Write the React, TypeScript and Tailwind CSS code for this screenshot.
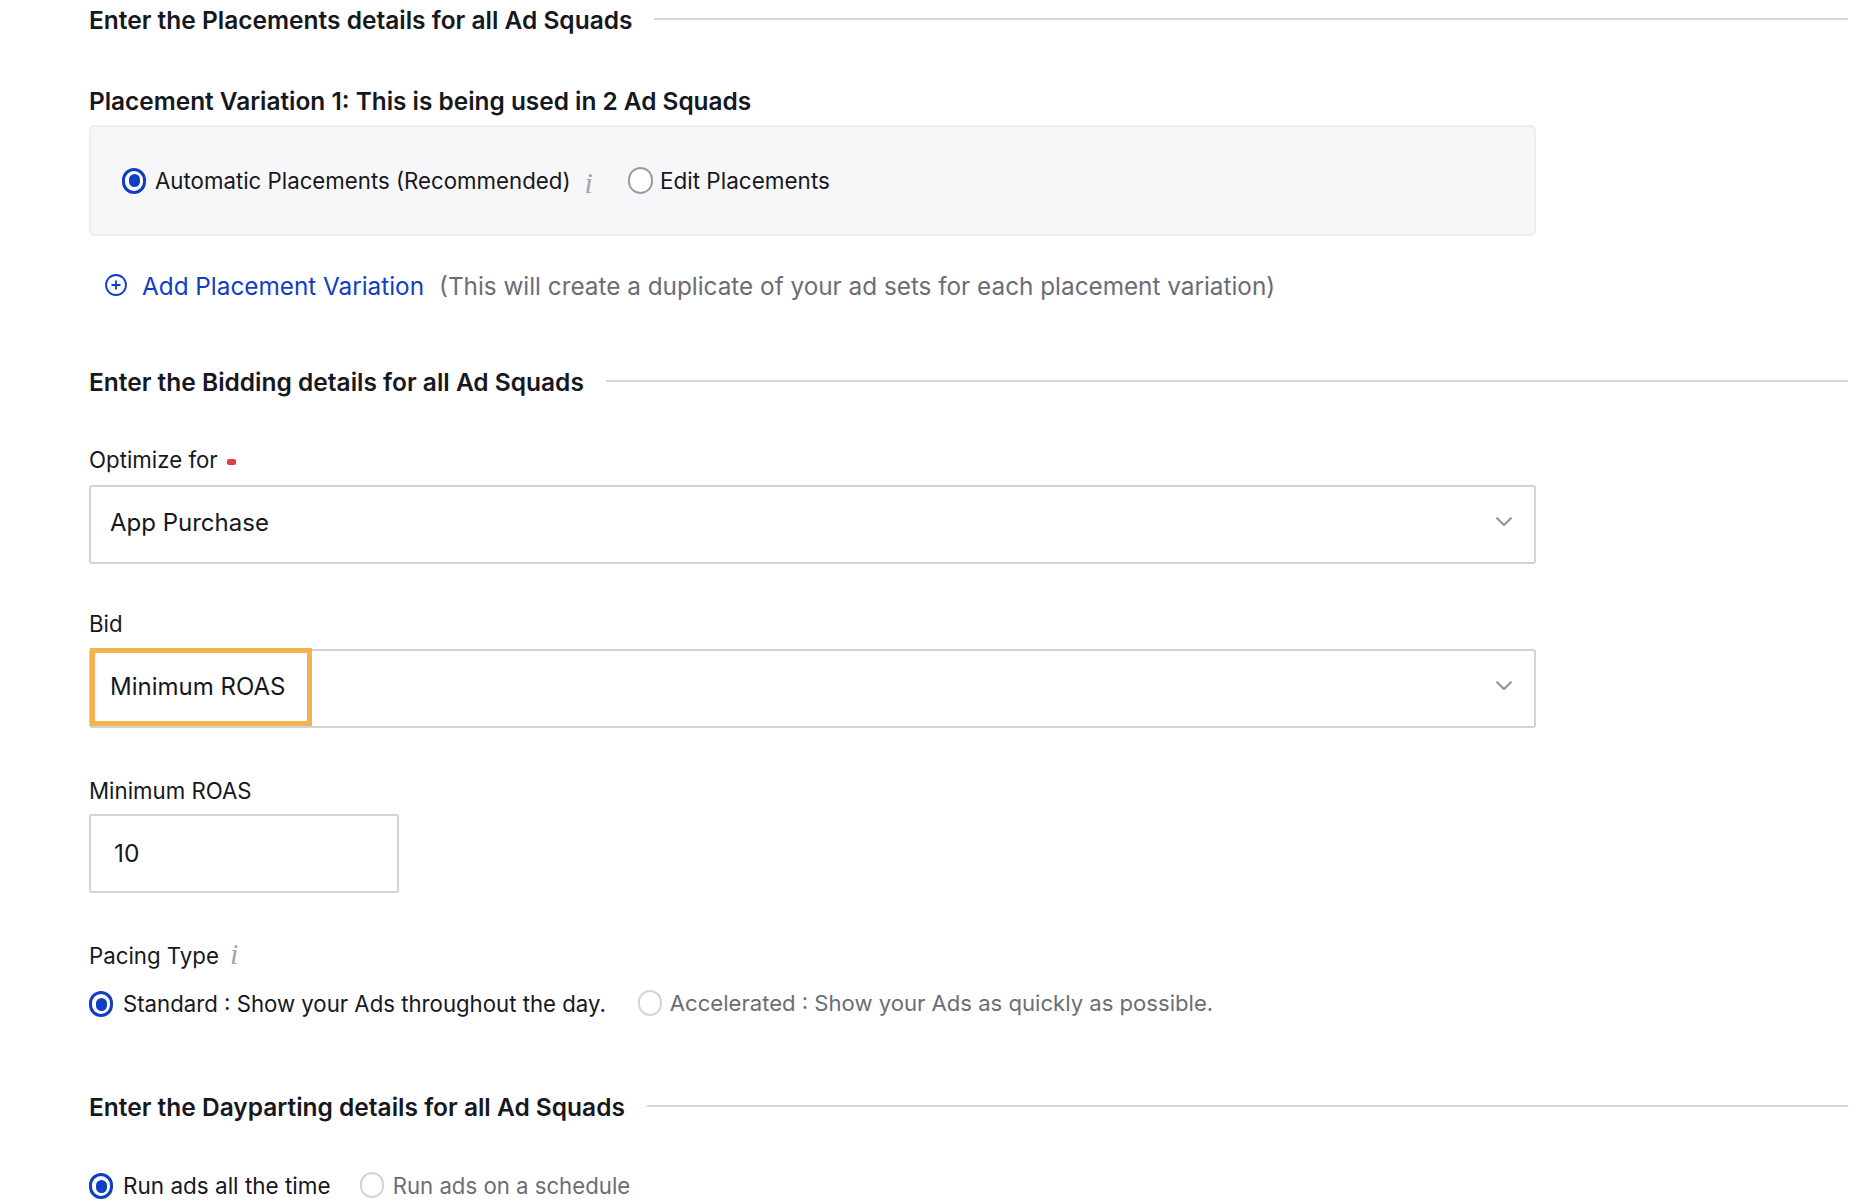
import React from "react";

function Radio({ on, tone = "dark" }: { on?: boolean; tone?: "dark" | "light" }) {
  if (on) {
    return (
      <span className="flex h-[26px] w-[24px] shrink-0 items-center justify-center rounded-full border-[3px] border-[#0f3fc4] bg-white">
        <span className="h-[13px] w-[11px] rounded-full bg-[#0f3fc4]" />
      </span>
    );
  }
  return (
    <span
      className={
        tone === "dark"
          ? "h-[27px] w-[25px] shrink-0 rounded-full border-2 border-[#9a9ca3] bg-white"
          : "h-[26px] w-[24px] shrink-0 -translate-y-[1px] rounded-full border-2 border-[#d3d4da] bg-white"
      }
    />
  );
}

function InfoI({ className }: { className: string }) {
  return (
    <span className={"font-['Liberation_Serif',serif] italic text-[#a3a5ad] " + className}>i</span>
  );
}

function SectionTitle({ children, className }: { children: string; className: string }) {
  return (
    <div className={"flex h-[40px] items-center gap-[22px] " + className}>
      <h2 className="whitespace-nowrap text-[24.5px] font-semibold leading-[40px] text-[#16181d]">{children}</h2>
      <div className="h-[2px] flex-1 -translate-y-[1px] bg-[#d6d7dc]" />
    </div>
  );
}

function Chevron() {
  return (
    <svg width="18" height="11" viewBox="0 0 18 11" fill="none" className="shrink-0 -translate-y-[2px]">
      <path d="M1.5 1.8 L9 9 L16.5 1.8" stroke="#8f9198" strokeWidth="2" />
    </svg>
  );
}

function Select({ value, highlight }: { value: string; highlight?: boolean }) {
  return (
    <div className="relative flex h-[79px] w-[1447px] items-center justify-between rounded-[3px] border-2 border-[#d2d3d9] bg-white pb-[3px] pl-[19px] pr-[21px]">
      <span className="text-[24px] text-[#16181d]">{value}</span>
      <Chevron />
      {highlight && (
        <span className="absolute -left-[1px] -top-[3px] h-[78px] w-[222px] border-[5px] border-[#f4b350]" />
      )}
    </div>
  );
}

export default function App() {
  return (
    <div className="h-[1204px] w-[1872px] overflow-hidden bg-white pl-[89px] pr-[24px] font-['Inter',sans-serif] text-[#16181d]">
      <SectionTitle className="">Enter the Placements details for all Ad Squads</SectionTitle>

      <h3 className="mt-[41px] text-[24.4px] font-semibold leading-[40px] text-[#16181d]">
        Placement Variation 1: This is being used in 2 Ad Squads
      </h3>
      <div className="mt-[4px] flex h-[111px] w-[1447px] items-center rounded-[5px] border-2 border-[#eeeef1] bg-[#f7f7f9] pl-[31px]">
        <Radio on />
        <span className="ml-[9px] text-[22.25px]">Automatic Placements (Recommended)</span>
        <InfoI className="ml-[14px] mt-[4px] text-[30px] leading-none" />
        <span className="ml-[35px] flex items-center">
          <Radio />
          <span className="ml-[7px] text-[22.5px]">Edit Placements</span>
        </span>
      </div>

      <div className="ml-[15px] mt-[30px] flex h-[40px] items-center">
        <svg width="24" height="24" viewBox="0 0 24 24" fill="none" className="shrink-0 -translate-y-[1px]">
          <circle cx="12" cy="12" r="10" stroke="#0f3fc4" strokeWidth="1.8" />
          <path d="M12 7.5v9M7.5 12h9" stroke="#0f3fc4" strokeWidth="1.8" />
        </svg>
        <span className="ml-[14px] text-[24.3px] text-[#0f3fc4]">Add Placement Variation</span>
        <span className="ml-[15px] text-[24.3px] text-[#6b6d76]">
          (This will create a duplicate of your ad sets for each placement variation)
        </span>
      </div>

      <SectionTitle className="mt-[56px]">Enter the Bidding details for all Ad Squads</SectionTitle>

      <div className="mt-[41px] flex h-[34px] items-center text-[22.25px]">
        Optimize for
        <span className="ml-[9px] mt-[4px] h-[6px] w-[9px] rounded-[2px] bg-[#dc3f45]" />
      </div>
      <div className="mt-[8px]">
        <Select value="App Purchase" />
      </div>

      <div className="mt-[43px] flex h-[34px] items-center text-[22.25px]">Bid</div>
      <div className="mt-[8px]">
        <Select value="Minimum ROAS" highlight />
      </div>

      <div className="mt-[46px] flex h-[34px] items-center text-[22.25px]">Minimum ROAS</div>
      <div className="mt-[6px] flex h-[79px] w-[310px] items-center rounded-[3px] border-2 border-[#d2d3d9] pl-[23px] text-[24.5px]">
        10
      </div>

      <div className="mt-[46px] flex h-[34px] items-center text-[22.25px]">
        Pacing Type
        <InfoI className="ml-[11px] -mt-[4px] text-[30px] leading-none" />
      </div>
      <div className="mt-[14px] flex h-[34px] items-center">
        <Radio on />
        <span className="ml-[10px] text-[22.2px]">Standard : Show your Ads throughout the day.</span>
        <span className="ml-[32px] flex items-center">
          <Radio tone="light" />
          <span className="ml-[8px] text-[22.1px] text-[#6b6d76]">
            Accelerated : Show your Ads as quickly as possible.
          </span>
        </span>
      </div>

      <SectionTitle className="mt-[66px]">Enter the Dayparting details for all Ad Squads</SectionTitle>

      <div className="mt-[42px] flex h-[34px] items-center">
        <Radio on />
        <span className="ml-[10px] text-[22.5px]">Run ads all the time</span>
        <span className="ml-[29px] flex items-center">
          <Radio tone="light" />
          <span className="ml-[9px] text-[22.2px] text-[#6b6d76]">Run ads on a schedule</span>
        </span>
      </div>
    </div>
  );
}
